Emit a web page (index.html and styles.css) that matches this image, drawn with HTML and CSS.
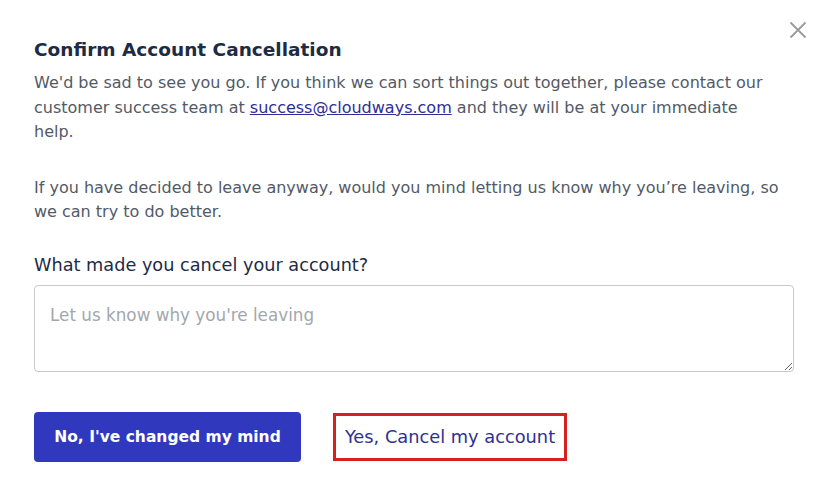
FILE: index.html
```html
<!DOCTYPE html>
<html lang="en">
<head>
<meta charset="utf-8">
<title>Confirm Account Cancellation</title>
<link rel="stylesheet" href="styles.css">
</head>
<body>
<div class="modal">
  <button class="close" aria-label="Close">
    <svg width="18" height="18" viewBox="0 0 18 18"><path d="M1.5 1.5 L16.5 16.5 M16.5 1.5 L1.5 16.5" stroke="#9a9a9a" stroke-width="1.8" fill="none"/></svg>
  </button>
  <h2 class="title">Confirm Account Cancellation</h2>
  <p class="text">We'd be sad to see you go. If you think we can sort things out together, please contact our<br>customer success team at <a href="#" class="link">success@cloudways.com</a> and they will be at your immediate<br>help.</p>
  <p class="text last">If you have decided to leave anyway, would you mind letting us know why you’re leaving, so<br>we can try to do better.</p>
  <label class="label" for="reason">What made you cancel your account?</label>
  <textarea id="reason" class="input" placeholder="Let us know why you're leaving"></textarea>
  <div class="actions">
    <button class="btn-primary">No, I've changed my mind</button>
    <button class="btn-link">Yes, Cancel my account</button>
  </div>
</div>
</body>
</html>
```
FILE: styles.css
```css
html, body {
  margin: 0;
  background: #ffffff;
}
body {
  font-family: "DejaVu Sans", "Open Sans", sans-serif;
}
.modal {
  position: relative;
  padding: 37px 29px 30px 34px;
}
.close {
  position: absolute;
  top: 21px;
  right: 16px;
  width: 18px;
  height: 18px;
  padding: 0;
  border: 0;
  background: none;
  cursor: pointer;
}
.close svg { display: block; }
.title {
  margin: 0 0 8px;
  font-size: 18.5px;
  line-height: 26px;
  font-weight: 700;
  color: #1e2b45;
}
.text {
  margin: 0 0 31px;
  font-size: 16px;
  line-height: 24.5px;
  color: #525a67;
}
.text.last {
  margin-bottom: 28px;
}
.link {
  color: #2c2e96;
  text-decoration: underline;
}
.label {
  display: block;
  font-size: 17.7px;
  line-height: 24px;
  color: #1e2b45;
  margin: 0 0 8px;
}
.input {
  display: block;
  box-sizing: border-box;
  width: 100%;
  height: 87px;
  border: 1px solid #c8c8c8;
  border-radius: 4px;
  padding: 17px 15px 12px;
  font-family: inherit;
  font-size: 16.8px;
  line-height: 24px;
  color: #333;
  resize: vertical;
}
.input::placeholder { color: #a3a7ad; }
.actions {
  display: flex;
  align-items: center;
  gap: 32px;
  margin-top: 40px;
}
.btn-primary {
  width: 267px;
  height: 50px;
  border: 0;
  border-radius: 4px;
  background: #3039be;
  color: #fff;
  font-family: inherit;
  font-size: 15.5px;
  font-weight: 700;
  cursor: pointer;
}
.btn-link {
  box-sizing: border-box;
  width: 234px;
  height: 48px;
  border: 3px solid #d9201f;
  background: #fff;
  color: #2e3192;
  font-family: inherit;
  font-size: 17.8px;
  font-weight: 400;
  padding: 0 6px;
  cursor: pointer;
}
```
